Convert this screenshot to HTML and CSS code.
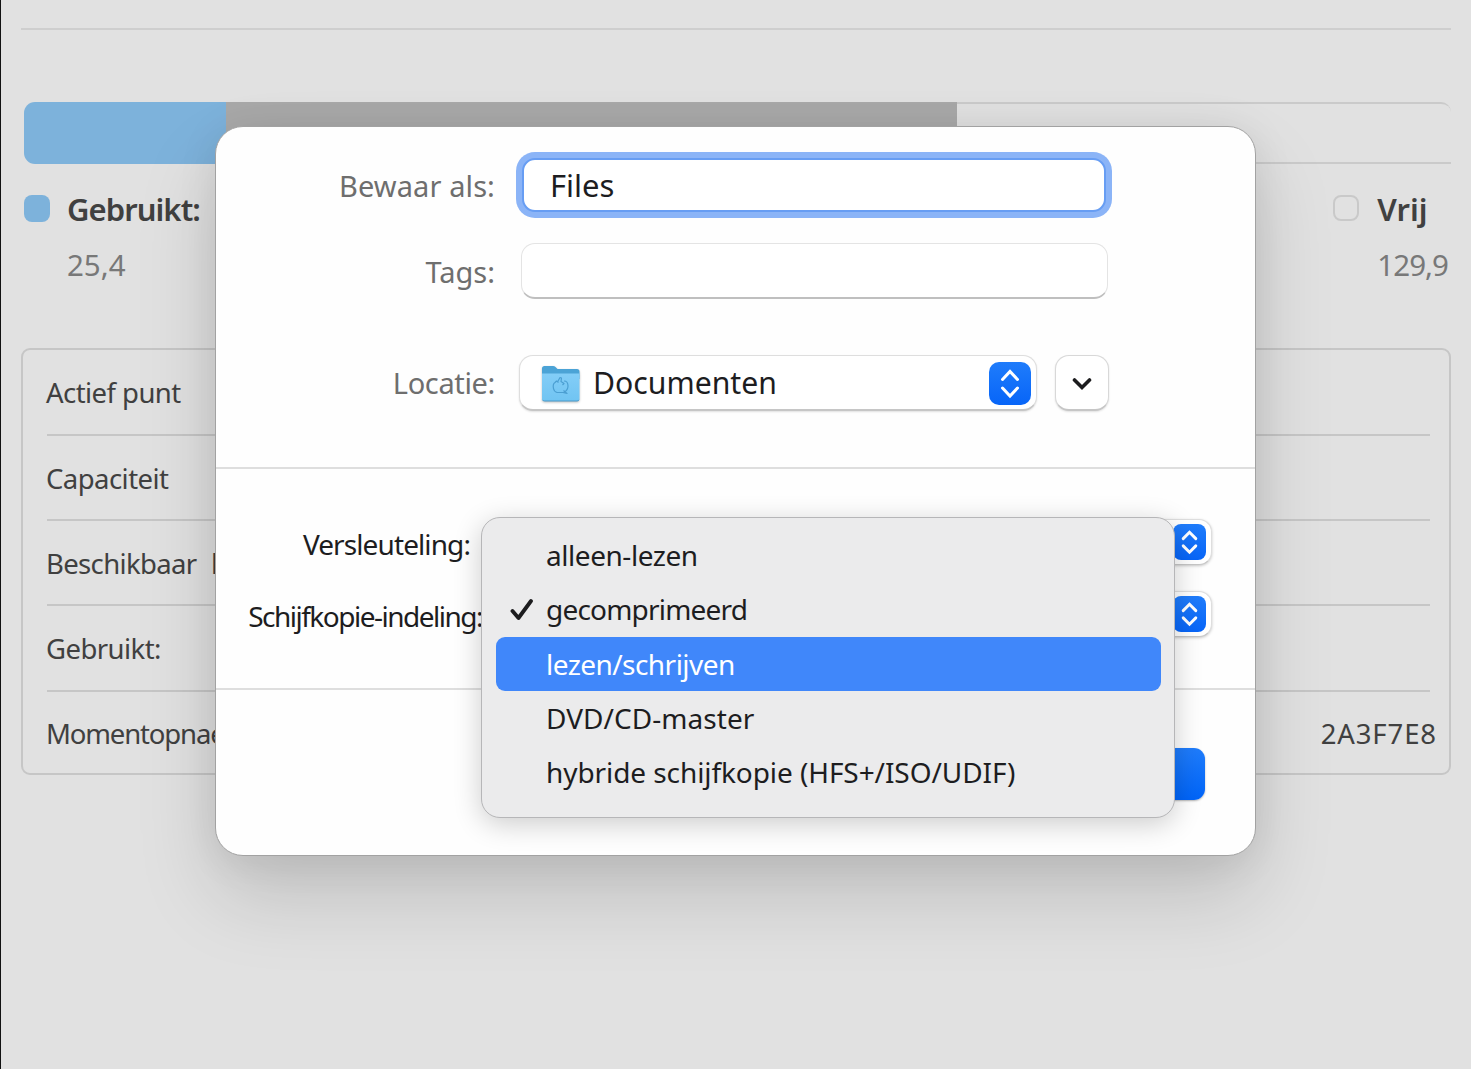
FILE: index.html
```
<!DOCTYPE html>
<html lang="nl">
<head>
    <meta charset="UTF-8" />
    <meta name="viewport" content="width=device-width, initial-scale=1.0" />
    <title>Schijfhulpprogramma</title>
    <link rel="stylesheet" href="styles.css">
</head>
<body>
    <main class="window">
        <hr class="divider">

        <div class="usage-bar">
            <div class="usage-used"></div>
            <div class="usage-other"></div>
            <div class="usage-free"></div>
        </div>

        <div class="legend">
            <div class="legend-item">
                <span class="swatch swatch-used"></span>
                <div>
                    <div class="legend-name legend-used">Gebruikt:</div>
                    <div class="legend-value">25,4</div>
                </div>
            </div>
            <div class="legend-item legend-free">
                <span class="swatch swatch-free"></span>
                <div>
                    <div class="legend-name">Vrij</div>
                    <div class="legend-value value-free">129,9</div>
                </div>
            </div>
        </div>

        <div class="info-card">
            <div class="info-row"><span>Actief punt</span></div>
            <div class="info-row"><span>Capaciteit</span></div>
            <div class="info-row"><span class="available">Beschikbaar l</span></div>
            <div class="info-row"><span>Gebruikt:</span></div>
            <div class="info-row"><span class="snapshots">Momentopnae</span><span class="uuid">2A3F7E8</span></div>
        </div>
    </main>

    <section class="dialog">
        <div class="save-fields">
            <div class="field-row row-name">
                <label class="label-name">Bewaar als:</label>
                <div class="text-field focused">Files</div>
            </div>
            <div class="field-row row-tags">
                <label>Tags:</label>
                <div class="text-field tags"></div>
            </div>
            <div class="field-row row-location">
                <label class="label-location">Locatie:</label>
                <div class="location">
                    <svg class="folder" viewBox="0 0 40 38">
                        <defs>
                            <linearGradient id="front" x1="0" y1="0" x2="0" y2="1">
                                <stop offset="0" stop-color="#83cdf7" />
                                <stop offset="1" stop-color="#70c4f2" />
                            </linearGradient>
                        </defs>
                        <path d="M1 3.500Q1 1 3.500 1H12Q13.500 1 14.500 2L16.500 4H36Q38.500 4 38.500 6.500V14H1Z" fill="#4ba3d6" />
                        <path d="M1 8.500H38.500V34Q38.500 36 36.500 36H3Q1 36 1 34Z" fill="url(#front)" />
                        <path d="M1.500 34.800Q2 36 3.500 36H36Q37.800 36 38 34.800" fill="none" stroke="#4a9aca" stroke-width="1" />
                        <path d="M16.500 17L19 12.500L20.500 13L20 16.500L23 18.500L21.500 20M23 16Q27 16 27 21Q27 25 23 27.500H16Q13 26.500 12.500 23.500Q11.500 19 14 17.500L15.500 16L17.500 17.500M22.500 25.500L26 28.500L22 27.500" fill="none" stroke="#4b9fd2" stroke-width="1.200" stroke-linejoin="round" />
                    </svg>
                    <span class="location-name">Documenten</span>
                    <span class="stepper">
                        <svg viewBox="0 0 42 43"><path d="M13.500 17.500L21 9.500L28.500 17.500M13.500 26L21 34L28.500 26" /></svg>
                    </span>
                </div>
                <div class="expand">
                    <svg viewBox="0 0 20 14"><path d="M2.500 3L10 10.500L17.500 3" /></svg>
                </div>
            </div>
        </div>

        <div class="image-fields">
            <div class="option-row">
                <label class="label-encryption">Versleuteling:</label>
                <div class="popup">
                    <span class="stepper small">
                        <svg viewBox="0 0 34 36"><path d="M10.500 14.500L17 8L23.500 14.500M10.500 22L17 28.500L23.500 22" /></svg>
                    </span>
                </div>
            </div>
            <div class="option-row">
                <label class="label-format">Schijfkopie-indeling:</label>
                <div class="popup">
                    <span class="stepper small">
                        <svg viewBox="0 0 34 36"><path d="M10.500 14.500L17 8L23.500 14.500M10.500 22L17 28.500L23.500 22" /></svg>
                    </span>
                </div>
            </div>
        </div>

        <div class="actions">
            <div class="save-btn"></div>
        </div>

        <ul class="menu">
            <li class="read-only">alleen-lezen</li>
            <li class="compressed">
                <svg class="check" viewBox="0 0 24 24"><path d="M2.500 13L8.500 20L21 3" /></svg>gecomprimeerd
            </li>
            <li class="selected">lezen/schrijven</li>
            <li class="dvd">DVD/CD-master</li>
            <li class="hybrid">hybride schijfkopie (HFS+/ISO/UDIF)</li>
        </ul>
    </section>
</body>
</html>
```
FILE: styles.css
```
:root {
    --bg-color: #e1e1e1;
    --line-color: #c6c6c6;
    --text-color: #1d1d1f;
    --dim-text: #404040;
    --gray-text: #6e6e6e;
    --used-color: #7db2db;
    --blue-top: #1f7cfb;
    --blue-bottom: #0765f8;
    --highlight: #4087fa;
}
* {
    box-sizing: border-box;
}
body {
    margin: 0;
    height: 1069px;
    overflow: hidden;
    position: relative;
    background: var(--bg-color);
    color: var(--text-color);
    font-family: "Noto Sans", sans-serif;
    font-size: 28px;
    line-height: 40px;
    white-space: nowrap;
}

/* Window behind the sheet */
.window {
    height: 1069px;
    border-left: 1px solid #111;
    padding: 28px 20px 0;
}
.divider {
    height: 2px;
    margin: 0;
    border: none;
    background: #cecece;
}
.usage-bar {
    display: flex;
    height: 62px;
    margin: 72px 0 0 3px;
}
.usage-used {
    width: 202px;
    background: var(--used-color);
    border-radius: 11px 0 0 11px;
}
.usage-other {
    width: 731px;
    background: #a9a9a9;
}
.usage-free {
    flex: 1;
    border: 2px solid #cacaca;
    border-width: 2px 0;
    border-radius: 0 10px 0 0;
}
.legend {
    display: flex;
    justify-content: space-between;
    height: 184px;
    padding: 25px 3px 0 3px;
}
.legend-item {
    display: flex;
    gap: 17px;
}
.legend-free {
    gap: 18px;
}
.swatch {
    width: 26px;
    height: 27px;
    margin-top: 6px;
    border-radius: 8px;
}
.swatch-used {
    background: var(--used-color);
}
.swatch-free {
    height: 26px;
    border: 2px solid #c9c9c9;
}
.legend-name {
    font-size: 31px;
    font-weight: 600;
    color: var(--dim-text);
}
.legend-used {
    letter-spacing: -0.95px;
}
.legend-value {
    margin-top: 16px;
    font-size: 29.5px;
    color: #787878;
}
.value-free {
    letter-spacing: -0.95px;
}
.info-card {
    height: 427px;
    padding: 0 19px 0 24px;
    border: 2px solid var(--line-color);
    border-radius: 9px;
    color: var(--dim-text);
    font-size: 27.5px;
    letter-spacing: -0.55px;
}
.info-row {
    display: flex;
    justify-content: space-between;
    align-items: center;
    height: 85px;
    padding-top: 2px;
    border-bottom: 2px solid var(--line-color);
}
.info-row:first-child,
.info-row:nth-child(4) {
    height: 86px;
}
.info-row:last-child {
    height: 82px;
    border-bottom: none;
}
.info-row span:first-child {
    margin-left: -1px;
}
.available {
    letter-spacing: -0.65px;
    word-spacing: 8px;
}
.snapshots {
    letter-spacing: -1.15px;
}
.uuid {
    margin-right: -7px;
    letter-spacing: 0.9px;
}

/* Save sheet */
.dialog {
    position: absolute;
    left: 215px;
    top: 126px;
    width: 1041px;
    height: 730px;
    border: 1px solid #a2a2a2;
    border-radius: 28px;
    background: #fefefe;
    box-shadow: 0 40px 80px rgba(0, 0, 0, 0.15), 0 4px 40px rgba(0, 0, 0, 0.08);
}
.save-fields {
    height: 342px;
    padding-top: 25px;
    border-bottom: 2px solid #dedede;
}
.field-row {
    display: flex;
    align-items: center;
}
.field-row label {
    width: 279px;
    padding-top: 2px;
    text-align: right;
    font-size: 29px;
    color: var(--gray-text);
}
.field-row .label-name {
    letter-spacing: 0.1px;
}
.field-row .label-location {
    padding-top: 0;
    letter-spacing: -0.35px;
}
.row-name {
    height: 66px;
}
.row-tags {
    height: 56px;
    margin-top: 25px;
}
.row-location {
    height: 56px;
    margin-top: 56px;
}
.text-field {
    border-radius: 14px;
    background: #fff;
}
.focused {
    width: 584px;
    height: 54px;
    margin-left: 27px;
    padding: 5px 0 0 26px;
    border: 2px solid #679df3;
    border-radius: 13px;
    box-shadow: 0 0 0 6px #8bb4f7;
    font-size: 31px;
}
.tags {
    width: 587px;
    height: 56px;
    margin-left: 26px;
    border: 1px solid #e4e4e4;
    border-bottom: 2px solid #bfbfbf;
}
.location {
    display: flex;
    align-items: center;
    width: 518px;
    height: 56px;
    margin-left: 24px;
    padding: 1px 5px 0 21px;
    border: 1px solid #dedede;
    border-bottom: 2px solid #c6c6c6;
    border-radius: 14px;
    background: #fff;
    box-shadow: 0 1px 2px rgba(0, 0, 0, 0.12);
}
.folder {
    width: 40px;
    height: 38px;
    margin-top: 1px;
    filter: drop-shadow(0 1px 1px rgba(0, 0, 0, 0.25));
}
.location-name {
    flex: 1;
    padding-left: 12px;
    font-size: 30.2px;
}
.stepper {
    width: 42px;
    height: 43px;
    border-radius: 10px;
    background: linear-gradient(var(--blue-top), var(--blue-bottom));
}
.stepper svg {
    display: block;
    width: 100%;
    height: 100%;
}
.stepper path {
    fill: none;
    stroke: #fff;
    stroke-width: 3;
    stroke-linecap: round;
    stroke-linejoin: miter;
}
.expand {
    display: flex;
    align-items: center;
    justify-content: center;
    width: 54px;
    height: 56px;
    margin-left: 18px;
    padding-top: 2px;
    border: 1px solid #d8d8d8;
    border-bottom: 2px solid #c6c6c6;
    border-radius: 14px;
    background: #fff;
    box-shadow: 0 1px 2px rgba(0, 0, 0, 0.12);
}
.expand svg {
    width: 20px;
    height: 14px;
}
.expand path {
    fill: none;
    stroke: #1c1c1e;
    stroke-width: 3.6;
    stroke-linecap: round;
}
.image-fields {
    display: flex;
    flex-direction: column;
    gap: 26px;
    height: 221px;
    padding-top: 50px;
    border-bottom: 2px solid #dedede;
}
.option-row {
    display: flex;
    align-items: center;
    height: 46px;
}
.option-row label {
    width: 266px;
    padding-top: 3px;
    text-align: right;
}
.option-row .label-encryption {
    padding-right: 12px;
    letter-spacing: -0.9px;
}
.option-row .label-format {
    letter-spacing: -1.5px;
}
.popup {
    display: flex;
    align-items: center;
    justify-content: flex-end;
    width: 722px;
    height: 46px;
    margin-left: 8px;
    padding-right: 5px;
    border: 1px solid #dedede;
    border-bottom-color: #c6c6c6;
    border-radius: 13px;
    background: #fff;
    box-shadow: 0 1px 3px rgba(0, 0, 0, 0.22);
}
.small {
    width: 33px;
    height: 36px;
    border-radius: 8px;
}
.actions {
    display: flex;
    justify-content: flex-end;
    padding: 58px 50px 0 0;
}
.save-btn {
    width: 160px;
    height: 52px;
    border-radius: 11px;
    background: linear-gradient(var(--blue-top), #0064f8);
    box-shadow: 0 1px 2px rgba(0, 0, 0, 0.3);
}

/* Format menu, open over the popups */
.menu {
    position: absolute;
    left: 265px;
    top: 390px;
    width: 694px;
    height: 301px;
    margin: 0;
    padding: 10px 13px 0 14px;
    list-style: none;
    border: 1.5px solid #b6b6b8;
    border-radius: 19px;
    background: #ebebec;
    box-shadow: 0 6px 28px rgba(0, 0, 0, 0.2);
}
.menu li {
    display: flex;
    align-items: center;
    height: 54.3px;
    padding-left: 50px;
    border-radius: 9px;
}
.read-only {
    letter-spacing: -0.45px;
}
.compressed {
    letter-spacing: -0.8px;
}
.dvd {
    letter-spacing: 0.05px;
}
.hybrid {
    letter-spacing: -0.08px;
}
.check {
    width: 24px;
    height: 24px;
    margin: 2px 12px 0 -36px;
}
.check path {
    fill: none;
    stroke: #1c1c1e;
    stroke-width: 3.8;
    stroke-linecap: round;
    stroke-linejoin: round;
}
.menu .selected {
    background: var(--highlight);
    color: #fff;
    letter-spacing: -0.55px;
}
```
